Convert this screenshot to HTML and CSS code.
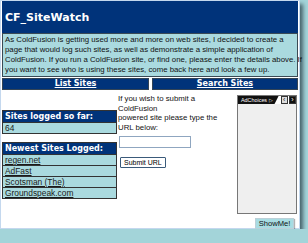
FILE: index.html
```html
<!DOCTYPE html>
<html lang="en">
<head>
    <meta charset="utf-8">
    <title>CF_SiteWatch</title>
    <link rel="stylesheet" href="styles.css">
</head>
<body>
<div class="page">
    <div class="title">CF_SiteWatch</div>
    <div class="intro">
        As ColdFusion is getting used more and more on web sites, I decided to create a<br>
        page that would log such sites, as well as demonstrate a simple application of<br>
        ColdFusion. If you run a ColdFusion site, or find one, please enter the details above. If<br>
        you want to see who is using these sites, come back here and look a few up.
    </div>
    <div class="nav">
        <a class="nav_cell" href="#">List Sites</a>
        <a class="nav_cell" href="#">Search Sites</a>
    </div>
    <div class="main">
        <div class="left">
            <div class="box">
                <div class="box_head">Sites logged so far:</div>
                <div class="box_row">64</div>
            </div>
            <div class="box">
                <div class="box_head">Newest Sites Logged:</div>
                <div class="box_row"><a href="#">regen.net</a></div>
                <div class="box_row"><a href="#">AdFast</a></div>
                <div class="box_row"><a href="#">Scotsman (The)</a></div>
                <div class="box_row"><a href="#">Groundspeak.com</a></div>
            </div>
        </div>
        <div class="middle">
            <p class="submit_txt">If you wish to submit a<br>ColdFusion<br>powered site please type the<br>URL below:</p>
            <input type="text" class="url_input">
            <button class="submit_btn">Submit URL</button>
        </div>
        <div class="right">
            <div class="ad">
                <div class="ad_bar">
                    <span class="ad_choices">AdChoices <span class="ad_tri">&#9655;</span></span>
                    <span class="ad_arrow light">&#8249;</span>
                    <span class="ad_arrow dark">&#8250;</span>
                </div>
            </div>
            <div class="show_row">
                <button class="show_btn">ShowMe!</button>
            </div>
        </div>
    </div>
</div>
</body>
</html>
```

FILE: styles.css
```css
body{
    margin: 0;
    background-color: #a3d4d9;
    font-family: "Liberation Sans", Arial, sans-serif;
}
.page{
    width: 296px;
    height: 227px;
    background-color: #ffffff;
    border: 1px solid #c4d8ee;
    padding: 0 1px;
    box-shadow: 3px 4px 4px rgba(40, 60, 70, 0.75);
}
.title{
    height: 32px;
    background-color: #00337a;
    color: #ffffff;
    font-family: "DejaVu Sans", Verdana, sans-serif;
    font-weight: bold;
    font-size: 11px;
    display: flex;
    align-items: center;
    padding-left: 3px;
}
.intro{
    background-color: #aadadf;
    border: 1px solid #3a4a55;
    font-size: 7.8px;
    line-height: 10px;
    padding: 1px 0 1px 2px;
    color: #111111;
    white-space: nowrap;
}
.nav{
    display: grid;
    grid-template-columns: 147px 1fr;
    gap: 3px;
    margin-top: 1px;
}
.nav_cell{
    display: block;
    height: 10px;
    line-height: 10px;
    background-color: #00337a;
    color: #ffffff;
    font-family: "DejaVu Sans", Verdana, sans-serif;
    font-weight: bold;
    font-size: 8px;
    text-align: center;
    border: 1px solid #334455;
}
.main{
    display: grid;
    grid-template-columns: 115px 118px 1fr;
    gap: 1px;
}
.main > div{
    min-width: 0;
}
.left{
    padding-top: 20px;
}
.box{
    border: 1px solid #333333;
    margin-bottom: 8px;
}
.box_head{
    height: 11px;
    line-height: 11px;
    background-color: #00337a;
    color: #ffffff;
    font-family: "DejaVu Sans", Verdana, sans-serif;
    font-weight: bold;
    font-size: 8px;
    padding-left: 2px;
}
.box_row{
    height: 10px;
    line-height: 10px;
    background-color: #aadadf;
    border-top: 1px solid #333333;
    font-size: 8.4px;
    padding-left: 2px;
    color: #1a1a1a;
}
.box_row a{
    color: #1a1a1a;
}
.middle{
    padding-top: 4px;
}
.submit_txt{
    margin: 0;
    font-size: 7.8px;
    line-height: 9.6px;
    color: #111111;
}
.url_input{
    display: block;
    margin: 4px 0 0 1px;
    width: 70px;
    height: 10px;
    padding: 0;
    border: 1px solid #8fa6c0;
}
.submit_btn{
    display: block;
    margin: 9px 0 0 2px;
    height: 11px;
    padding: 0 3px;
    font-family: "Liberation Sans", Arial, sans-serif;
    font-size: 7px;
    line-height: 9px;
    background-color: #ffffff;
    border: 1px solid #3a5a7a;
    border-radius: 1px;
}
.right{
    padding-top: 5px;
    padding-right: 1px;
}
.ad{
    height: 117px;
    background-color: #efefef;
    border: 1px solid #777777;
}
.ad_bar{
    display: flex;
    align-items: center;
    height: 8px;
    background-color: #ffffff;
}
.ad_choices{
    height: 8px;
    line-height: 8px;
    background-color: #111111;
    color: #ffffff;
    font-size: 5.4px;
    padding: 0 6px 0 3px;
    width: 33px;
    white-space: nowrap;
    clip-path: polygon(0 0, 100% 0, 90% 100%, 0 100%);
}
.ad_tri{
    font-size: 5.4px;
}
.ad_arrow{
    width: 6px;
    height: 6px;
    line-height: 6px;
    font-size: 7px;
    text-align: center;
    margin-left: 1px;
    border: 1px solid #333333;
}
.ad_arrow.light{
    background-color: #dddddd;
    color: #222222;
    margin-left: 2px;
}
.ad_arrow.dark{
    background-color: #111111;
    color: #ffffff;
}
.show_row{
    display: flex;
    justify-content: flex-end;
    padding: 4px 3px 0 0;
}
.show_btn{
    width: 39px;
    height: 11px;
    padding: 0;
    font-family: "Liberation Sans", Arial, sans-serif;
    font-size: 7.6px;
    line-height: 9px;
    background-color: #a8dce2;
    border: 1px solid #bcd0d8;
    color: #111111;
    box-shadow: 1px 1px 1px rgba(0, 0, 0, 0.3);
}
```
